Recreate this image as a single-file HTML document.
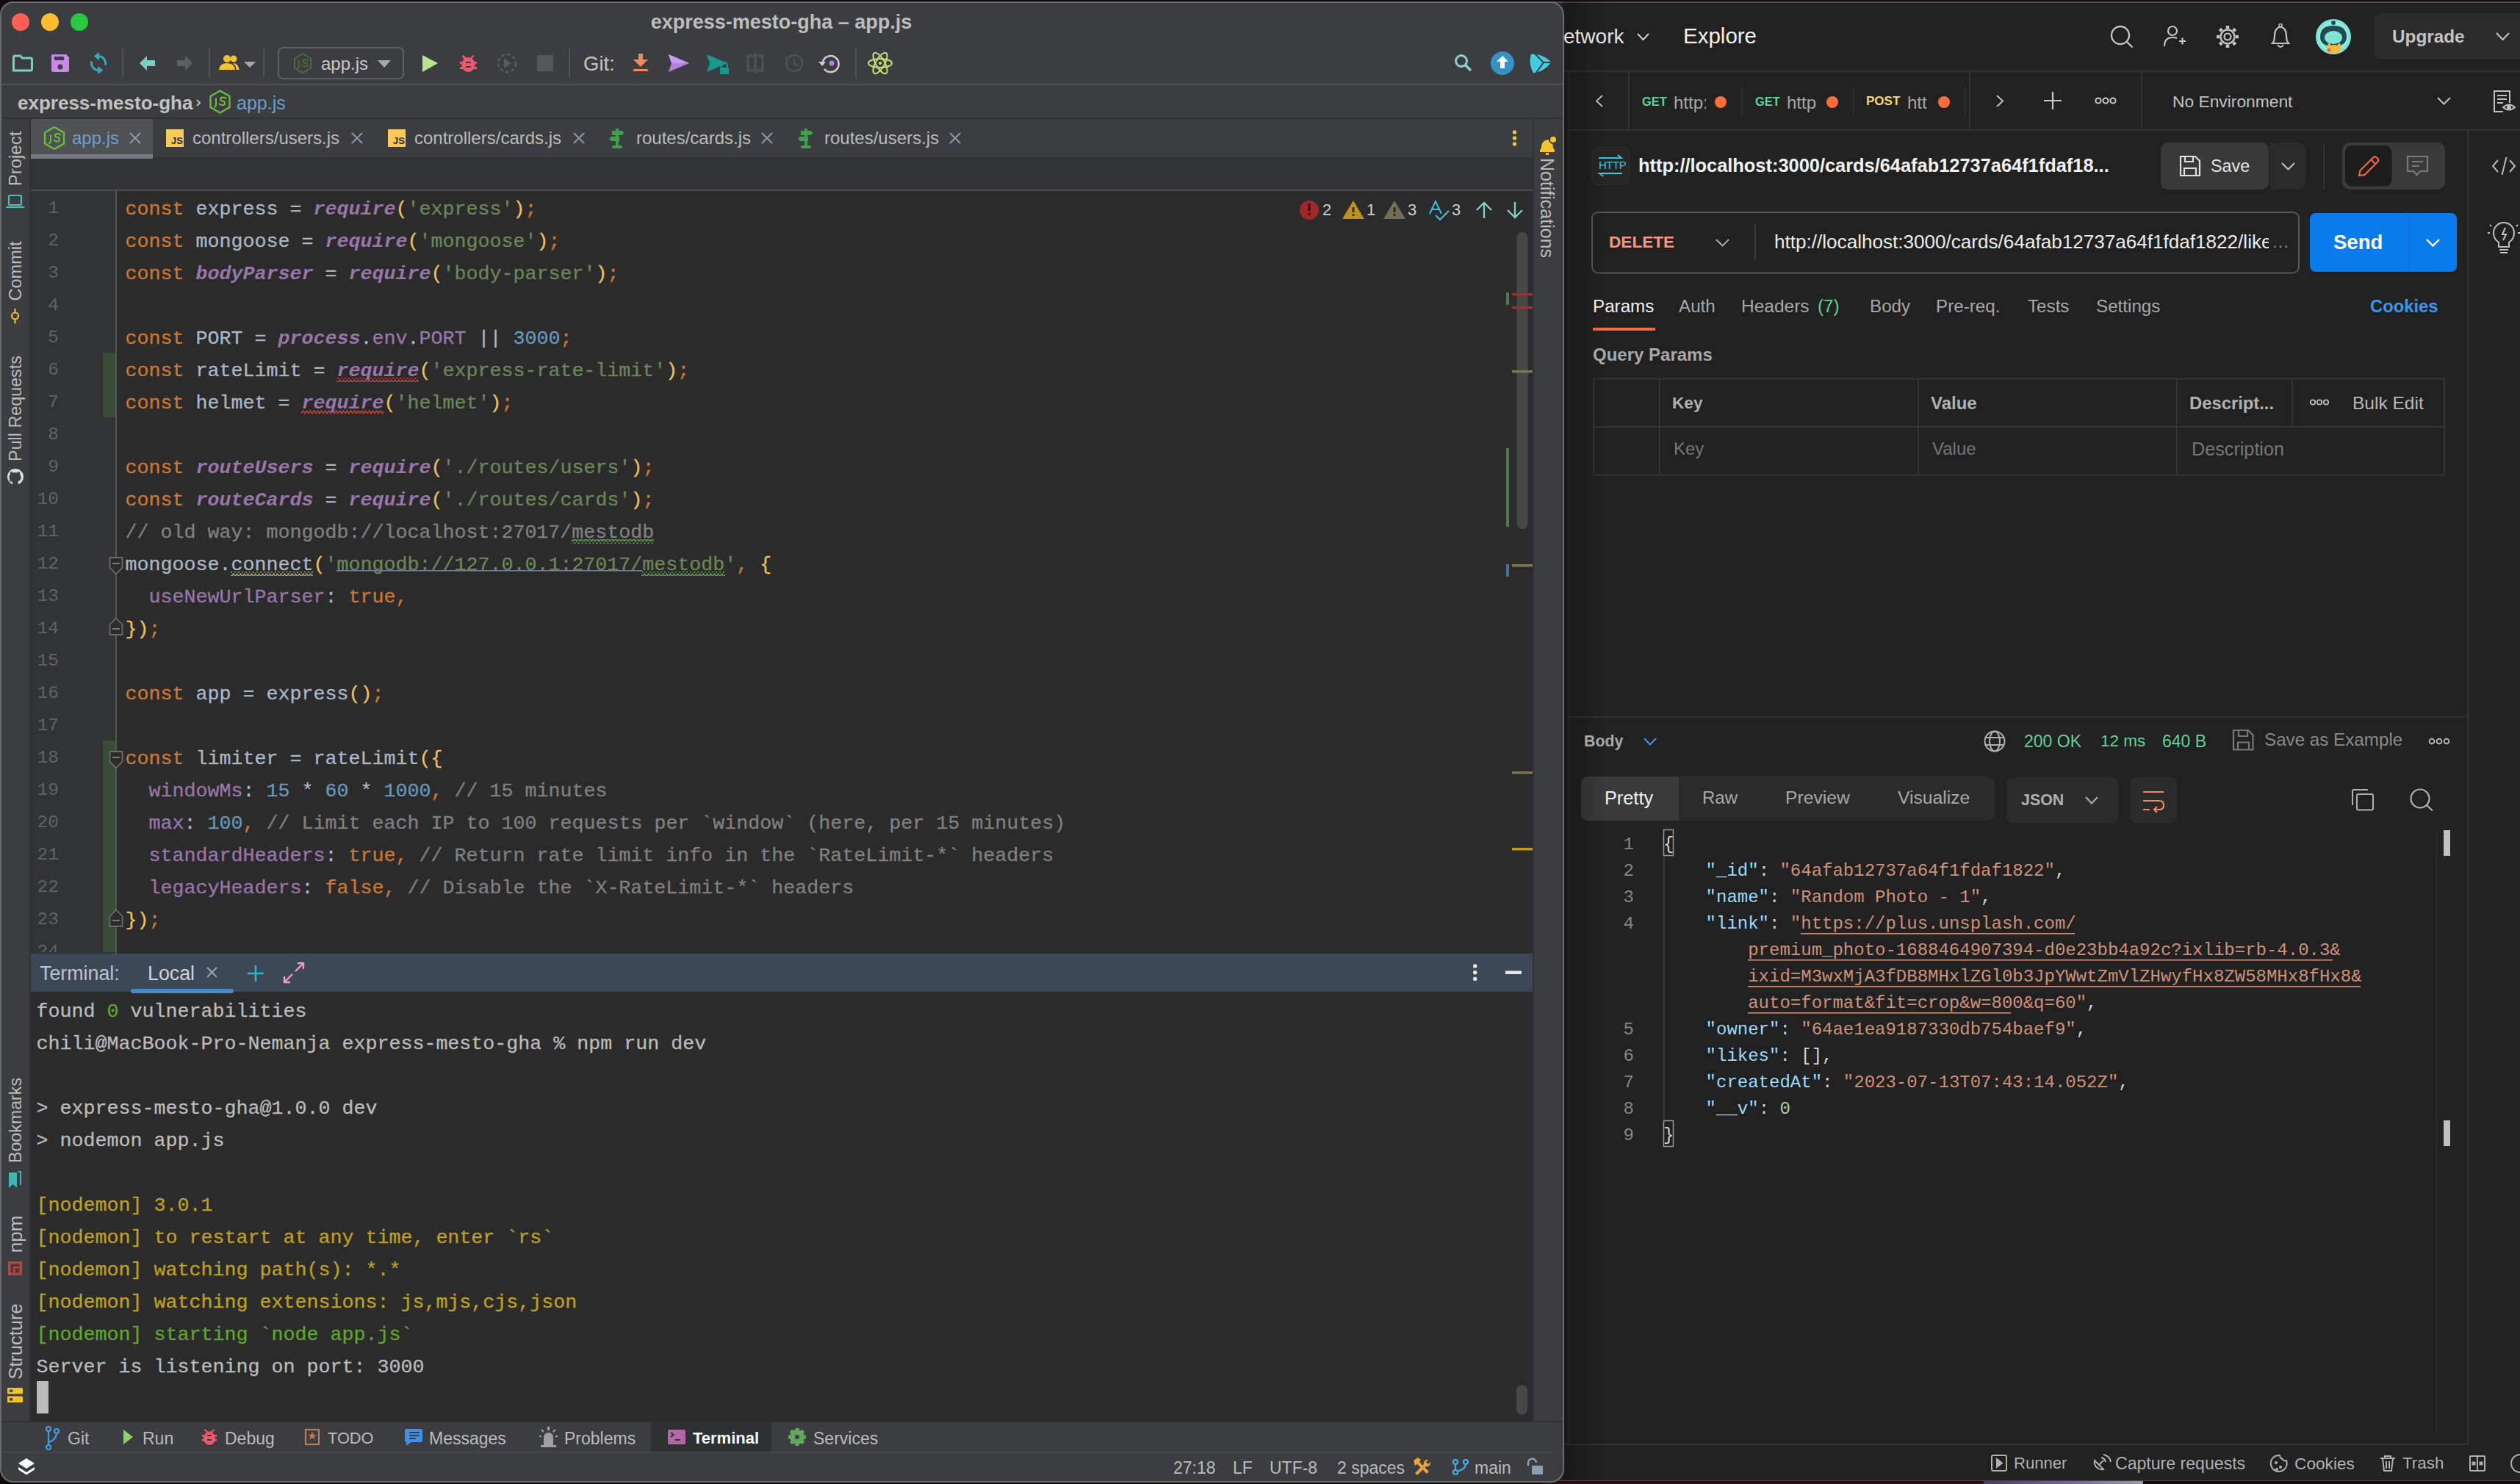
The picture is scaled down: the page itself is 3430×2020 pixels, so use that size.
<!DOCTYPE html>
<html><head><meta charset="utf-8">
<style>
*{margin:0;padding:0;box-sizing:border-box}
html,body{width:3430px;height:2020px;overflow:hidden;background:#150a0e}
body{position:relative;font-family:"Liberation Sans",sans-serif;color:#bbb}
.a{position:absolute}
.m{font-family:"Liberation Mono",monospace;white-space:pre}
.nw{white-space:nowrap}
/* code */
#code{left:170.5px;top:263px;font-size:26.67px;line-height:44px;color:#a9b7c6;-webkit-text-stroke:0.3px}
#code div{height:44px}
.k{color:#cc7832}.f{color:#9876aa;font-style:italic;font-weight:bold;-webkit-text-stroke:0}.p{color:#9876aa}.s{color:#6a8759}.y{color:#f0c05a}.n{color:#6897bb}.c{color:#808080}
#lnum{left:30px;top:262px;width:50px;height:1034px;overflow:hidden;font-size:24.5px;line-height:44px;color:#606366;text-align:right}
#lnum div{height:44px}
#term{left:49.5px;top:1355px;font-size:26.67px;line-height:44px;color:#bbbbbb;-webkit-text-stroke:0.3px}
#term div{height:44px}
.ty{color:#bea020}.tg{color:#5fa72c}
#json{left:2324px;top:1132.4px;font-size:24px;line-height:36px;color:#d4d4d4}
#json div{height:36px}
.jk{color:#9cdcfe}.js{color:#ce9178}.jn{color:#b5cea8}
#jnum{left:2180px;top:1132.4px;width:44px;font-size:24px;line-height:36px;color:#858585;text-align:right}
#jnum div{height:36px}
</style></head><body>

<!-- ================= POSTMAN ================= -->
<div class="a" style="left:2100px;top:2px;width:1330px;height:2013px;background:#212121"></div>
<div class="a" style="left:2100px;top:2px;width:1330px;height:1.5px;background:#4a4a4a"></div>
<svg class="a" style="left:2100px;top:0" width="1330" height="2020">
 <g transform="translate(-2100,0)" fill="none" stroke="#333" stroke-width="2">
  <path d="M2100 97 H3430"/><path d="M2136 177 H3430"/>
  <path d="M2135.5 98 V1966"/><path d="M2217 98 V176"/><path d="M2681 98 V176"/><path d="M2915 98 V176"/>
  <path d="M3359 177 V1966"/><path d="M2136 976 H3359"/><path d="M2127 1966 H3359"/>
 </g>
 <g transform="translate(-2100,0)">
  <path d="M2371 117 V157 M2523 117 V157 M2675 117 V157" stroke="#333" stroke-width="1.5"/>
  <path d="M2229 46 l7.5 8 7.5-8" fill="none" stroke="#d0d0d0" stroke-width="2"/>
  <!-- header icons -->
  <circle cx="2886" cy="48" r="12" fill="none" stroke="#c4c4c4" stroke-width="2.4"/><path d="M2894.5 56.5 l8 8" stroke="#c4c4c4" stroke-width="2.4"/>
  <circle cx="2957" cy="42" r="6" fill="none" stroke="#c4c4c4" stroke-width="2.2"/><path d="M2946 63 q0-12 11-12 q4 0 6 1" fill="none" stroke="#c4c4c4" stroke-width="2.2"/><path d="M2966 56 h9 M2970.5 51.5 v9" stroke="#c4c4c4" stroke-width="2.2"/>
  <g transform="translate(3032 50)"><circle r="9.5" fill="none" stroke="#c4c4c4" stroke-width="2.4"/><circle r="4.5" fill="none" stroke="#c4c4c4" stroke-width="2.2"/>
   <g stroke="#c4c4c4" stroke-width="4.5"><path d="M0 -15 v4 M0 11 v4 M-15 0 h4 M11 0 h4 M-10.6 -10.6 l2.8 2.8 M7.8 7.8 l2.8 2.8 M10.6 -10.6 l-2.8 2.8 M-7.8 7.8 l-2.8 2.8"/></g></g>
  <path d="M3093 59 q3-3 3-10 q0-11 8-12.5 q8 1.5 8 12.5 q0 7 3 10z" fill="none" stroke="#c4c4c4" stroke-width="2.2"/><circle cx="3104" cy="34.5" r="2" fill="none" stroke="#c4c4c4" stroke-width="1.6"/><path d="M3100 61 q4 6 8 0" fill="none" stroke="#c4c4c4" stroke-width="2"/>
  <circle cx="3176" cy="50" r="24" fill="#7fe6d6"/><circle cx="3176" cy="50" r="19" fill="none" stroke="#a6f0e6" stroke-width="1.3"/>
  <path d="M3158 50 q0-15 18-15 q18 0 18 15 q0 13-18 13 q-18 0-18-13z" fill="#244a55"/><ellipse cx="3176" cy="51" rx="12" ry="9" fill="#7fe6d6"/><circle cx="3176" cy="31" r="3" fill="#244a55"/>
  <path d="M3168 72 q-2-10 2-14 l3 4 q4-2 8 0 l3-4 q4 5 1 14z" fill="#f7b93a"/><circle cx="3170" cy="68" r="2.3" fill="#e8584b"/>
  <rect x="3232" y="18" width="220" height="63" rx="9" fill="#2b2b2b"/>
  <path d="M3398 45 l8.5 9 8.5-9" fill="none" stroke="#c0c0c0" stroke-width="2.2"/>
  <!-- tab row -->
  <path d="M2181 130 l-8 7.5 8 7.5" fill="none" stroke="#c0c0c0" stroke-width="2"/>
  <circle cx="2342" cy="139" r="8" fill="#ff6c37"/><circle cx="2494" cy="139" r="8" fill="#ff6c37"/><circle cx="2646" cy="139" r="8" fill="#ff6c37"/>
  <path d="M2718 130 l8 7.5 -8 7.5" fill="none" stroke="#c0c0c0" stroke-width="2"/>
  <path d="M2794 125 v24 M2782 137 h24" stroke="#c8c8c8" stroke-width="2.2"/>
  <g fill="none" stroke="#c8c8c8" stroke-width="2"><circle cx="2856" cy="137" r="3.6"/><circle cx="2866" cy="137" r="3.6"/><circle cx="2876" cy="137" r="3.6"/></g>
  <path d="M3318 133 l8.5 8.5 8.5-8.5" fill="none" stroke="#c0c0c0" stroke-width="2"/>
  <g fill="none" stroke="#c0c0c0" stroke-width="2"><path d="M3416 140 V124 h-21 v28 h12"/><path d="M3399 130 h13 M3399 135 h13 M3399 140 h8"/><path d="M3407 146 q8-7 16 0 q-8 7-16 0z"/><circle cx="3415" cy="146" r="2" fill="#c0c0c0"/></g>
  <!-- URL row -->
  <rect x="2167" y="200.5" width="50.5" height="51" rx="9" fill="#262626" stroke="#2f2f2f" stroke-width="1.5"/>
  <g fill="none" stroke="#3cc8dc" stroke-width="1.8"><path d="M2176 215 h31 l-5-4"/><path d="M2208 236 h-31 l5 4"/></g>
  <rect x="2941" y="194" width="147" height="64" rx="10" fill="#393939"/>
  <rect x="3090" y="194" width="48" height="64" rx="10" fill="#2b2b2b"/><rect x="3090" y="194" width="10" height="64" fill="#2b2b2b"/>
  <g fill="none" stroke="#e0e0e0" stroke-width="2.2"><path d="M2968 213 h20 l6 6 v20 h-26z"/><path d="M2974 213 v7 h11 v-7"/><path d="M2973 239 v-10 h16 v10"/></g>
  <path d="M3106 222 l8.5 8.5 8.5-8.5" fill="none" stroke="#c0c0c0" stroke-width="2"/>
  <path d="M3163 194 V258" stroke="#333" stroke-width="2"/>
  <rect x="3188" y="194" width="140" height="64" rx="10" fill="#3a3a3a"/>
  <rect x="3192" y="198" width="63.5" height="55.5" rx="9" fill="#1d1d1d"/>
  <g fill="none" stroke="#ff6c37" stroke-width="2"><path d="M3211 239 l1.5-7 18-18 q2-1.5 4 0 l2 2 q1.5 2 0 4 l-18 18z"/><path d="M3228 218 l4.5 4.5"/></g>
  <g fill="none" stroke="#7a7a7a" stroke-width="2.2"><path d="M3277 213 h27 v20 h-10 l-4.5 5 -4.5-5 h-8z"/><path d="M3283 220 h15 M3283 226 h10"/></g>
  <g fill="none" stroke="#b8b8b8" stroke-width="2"><path d="M3400 218 l-7 8 7 8 M3416 218 l7 8 -7 8 M3411.5 214 l-6 24"/></g>
  <!-- method row -->
  <rect x="2167" y="289" width="962" height="82.5" rx="8" fill="#212121" stroke="#565656" stroke-width="2"/>
  <path d="M2336 326 l8.5 8.5 8.5-8.5" fill="none" stroke="#a8a8a8" stroke-width="2"/>
  <path d="M2389 306 V354" stroke="#3d3d3d" stroke-width="2"/>
  <rect x="3144" y="290" width="200" height="80" rx="8" fill="#0a7bec"/>
  <path d="M3278.5 290 V370" stroke="#0b6fd3" stroke-width="1.6"/>
  <path d="M3303 326 l8.5 8.5 8.5-8.5" fill="none" stroke="#fff" stroke-width="2.4"/>
  <g fill="none" stroke="#c0c0c0" stroke-width="2"><path d="M3401 330 q-7-5-7-13 a14 14 0 0 1 28 0 q0 8-7 13 v6 h-14z"/><path d="M3402 340 h12 M3403 344 h10"/><path d="M3410 310 l-4 9 h5 l-4 8"/><path d="M3386 317 h3 M3427 317 h3 M3389 306 l2 2 M3427 306 l-2 2"/></g>
  <!-- params tabs -->
  <rect x="2168" y="446" width="85" height="4" fill="#ff6c37"/>
  <!-- table -->
  <g fill="none" stroke="#353535" stroke-width="2"><rect x="2169" y="515.5" width="1158" height="131"/><path d="M2169 581 H3327 M2259 515.5 V646.5 M2611 515.5 V646.5 M2963 515.5 V646.5 M3120 515.5 V581"/></g>
  <g fill="none" stroke="#c0c0c0" stroke-width="1.8"><circle cx="3148" cy="547.5" r="3.2"/><circle cx="3157" cy="547.5" r="3.2"/><circle cx="3166" cy="547.5" r="3.2"/></g>
  <!-- response bar -->
  <path d="M2238 1005 l8 8.5 8-8.5" fill="none" stroke="#3d8fe8" stroke-width="2.2"/>
  <g fill="none" stroke="#b0b0b0" stroke-width="2"><circle cx="2715" cy="1009" r="13.5"/><ellipse cx="2715" cy="1009" rx="7" ry="13.5"/><path d="M2702 1004 h26 M2702 1014 h26"/></g>
  <g fill="none" stroke="#777" stroke-width="2.2"><path d="M3040 994 h20 l6.5 6.5 v20 h-26.5z"/><path d="M3047 994 v8 h12 v-8"/><path d="M3046 1020.5 v-10 h15 v10"/></g>
  <g fill="none" stroke="#c0c0c0" stroke-width="1.8"><circle cx="3310" cy="1009" r="3.4"/><circle cx="3320" cy="1009" r="3.4"/><circle cx="3330" cy="1009" r="3.4"/></g>
  <rect x="2152" y="1057" width="563" height="60" rx="9" fill="#2b2b2b"/>
  <path d="M2161 1057 h124 v60 h-124 a9 9 0 0 1 -9-9 v-42 a9 9 0 0 1 9-9z" fill="#3a3a3a"/>
  <rect x="2731" y="1057.5" width="152" height="63" rx="9" fill="#2b2b2b"/>
  <path d="M2839 1085 l8 8.5 8-8.5" fill="none" stroke="#b0b0b0" stroke-width="2"/>
  <rect x="2899" y="1057.5" width="64" height="63" rx="9" fill="#2b2b2b"/>
  <g fill="none" stroke="#f08a5d" stroke-width="2.2"><path d="M2917 1078 h28 M2917 1090 h22 q6 0 6 6 q0 6-6 6 h-6 M2936 1098 l-4 4 4 4 M2917 1102 h9"/></g>
  <g fill="none" stroke="#b0b0b0" stroke-width="2"><rect x="3208" y="1081" width="22" height="21.5" rx="2"/><path d="M3202 1096 v-19 q0-2 2-2 h19"/></g>
  <circle cx="3294" cy="1087" r="12.5" fill="none" stroke="#b0b0b0" stroke-width="2.2"/><path d="M3303 1096 l8 7.5" stroke="#b0b0b0" stroke-width="2.2"/>
  <!-- json editor decorations -->
  <rect x="2264.5" y="1129.5" width="13" height="35" fill="none" stroke="#9a9a9a" stroke-width="1.5"/>
  <rect x="2264.5" y="1525.5" width="13" height="35" fill="none" stroke="#9a9a9a" stroke-width="1.5"/>
  <path d="M2265 1165 V1525" stroke="#4a4a44" stroke-width="1.3"/>
  <path d="M3316.5 1130 V1953" stroke="#2e2e2e" stroke-width="1.5"/>
  <rect x="3326" y="1130" width="9" height="35" fill="#c0c0c0"/><rect x="3326" y="1525" width="9" height="35" fill="#c0c0c0"/>
  <!-- link underlines -->
  <g fill="#ce9178"><rect x="2451" y="1170" width="0" height="0"/></g>
  <!-- status bar icons -->
  <g fill="none" stroke="#b0b0b0" stroke-width="2"><rect x="2711" y="1981" width="20" height="21" rx="2"/><path d="M2718 1986 l7 5.5 -7 5.5z" fill="#b0b0b0"/></g>
  <g fill="none" stroke="#b0b0b0" stroke-width="2"><path d="M2851 1988 a10 10 0 0 0 12 12z"/><path d="M2857 1994 l6-6 M2860 1984 q5 1 6 6 M2863 1980 q9 2 10 10"/></g>
  <g fill="none" stroke="#b0b0b0" stroke-width="2"><path d="M3112 1988 a11 11 0 1 1 -9-7 q0 4 4 5 q0 3 5 2z"/><circle cx="3098" cy="1991" r="1" fill="#b0b0b0"/><circle cx="3104" cy="1997" r="1" fill="#b0b0b0"/><circle cx="3099" cy="2000" r="1" fill="#b0b0b0"/></g>
  <g fill="none" stroke="#b0b0b0" stroke-width="2"><path d="M3240 1985 h20 M3246 1985 v-3 h8 v3 M3243 1985 l2 17 h10 l2-17 M3248 1989 v10 M3252 1989 v10"/></g>
  <g fill="none" stroke="#b0b0b0" stroke-width="2"><rect x="3362" y="1982" width="20" height="20" rx="1"/><path d="M3372 1982 v20"/><rect x="3365.5" y="1990.5" width="3" height="3" fill="#b0b0b0"/><rect x="3375.5" y="1990.5" width="3" height="3" fill="#b0b0b0"/></g>
  <circle cx="3430" cy="1992" r="12" fill="none" stroke="#b0b0b0" stroke-width="2"/>
 </g>
</svg>
<div class="a" style="left:2100px;top:2015px;width:1330px;height:1px;background:#4a4a4a"></div>
<div class="a" style="left:2100px;top:2016px;width:600px;height:4px;background:#2e0c14"></div>
<div class="a" style="left:2700px;top:2016px;width:217px;height:4px;background:linear-gradient(90deg,#4a3a6a,#7a6aa8 60%,#9a9aa8)"></div>
<div class="a" style="left:0;top:2017px;width:2100px;height:3px;background:#0a0a0a"></div>
<!-- shadow of IJ window on postman -->
<div class="a" style="left:2127px;top:2px;width:60px;height:2013px;background:linear-gradient(90deg,rgba(0,0,0,0.28),rgba(0,0,0,0))"></div>
<div class="a nw" style="left:2128px;top:34px;font-size:28px;color:#e2e2e2;line-height:32px">etwork</div>
<div class="a nw" style="left:2291px;top:33px;font-size:29.5px;color:#f0f0f0;line-height:32px">Explore</div>
<div class="a nw" style="left:3256px;top:34px;font-size:24.3px;font-weight:bold;color:#c4c4c4;line-height:32px">Upgrade</div>
<div class="a nw" style="left:2235px;top:126px;font-size:16.5px;font-weight:bold;color:#5fd495;line-height:24px">GET</div>
<div class="a nw" style="left:2278px;top:124.5px;font-size:24px;color:#a6a6a6;line-height:30px;width:44px;overflow:hidden">http:</div>
<div class="a nw" style="left:2389px;top:126px;font-size:16.5px;font-weight:bold;color:#5fd495;line-height:24px">GET</div>
<div class="a nw" style="left:2432px;top:124.5px;font-size:24px;color:#a6a6a6;line-height:30px">http</div>
<div class="a nw" style="left:2540px;top:126px;font-size:17px;font-weight:bold;color:#f8d86c;line-height:24px">POST</div>
<div class="a nw" style="left:2596px;top:124.5px;font-size:24px;color:#a6a6a6;line-height:30px">htt</div>
<div class="a nw" style="left:2957px;top:123px;font-size:22.8px;color:#c0c0c0;line-height:30px">No Environment</div>
<div class="a nw" style="left:2176px;top:216px;font-size:15px;color:#3cc8dc;line-height:18px;letter-spacing:-0.5px">HTTP</div>
<div class="a nw" style="left:2230px;top:209px;font-size:25.4px;font-weight:bold;color:#f2f2f2;line-height:32px">http://localhost:3000/cards/64afab12737a64f1fdaf18...</div>
<div class="a nw" style="left:3009px;top:210px;font-size:23.4px;color:#e4e4e4;line-height:32px">Save</div>
<div class="a nw" style="left:2190px;top:314px;font-size:22.6px;font-weight:bold;color:#ef9a87;line-height:32px">DELETE</div>
<div class="a nw" style="left:2415px;top:313px;font-size:26.1px;color:#ececec;line-height:32px;width:673px;overflow:hidden">http://localhost:3000/cards/64afab12737a64f1fdaf1822/likes</div>
<div class="a nw" style="left:3092px;top:313px;font-size:24px;color:#8a8a8a;line-height:32px">…</div>
<div class="a nw" style="left:3176px;top:313px;font-size:27.5px;font-weight:bold;color:#ffffff;line-height:34px">Send</div>
<div class="a nw" style="left:2168px;top:402px;font-size:24.2px;color:#f0f0f0;line-height:30px">Params</div>
<div class="a nw" style="left:2285px;top:402px;font-size:24.2px;color:#a8a8a8;line-height:30px">Auth</div>
<div class="a nw" style="left:2370px;top:402px;font-size:24.5px;color:#a8a8a8;line-height:30px">Headers</div><div class="a nw" style="left:2474px;top:402px;font-size:24.2px;color:#5fd495;line-height:30px">(7)</div>
<div class="a nw" style="left:2545px;top:402px;font-size:24.2px;color:#a8a8a8;line-height:30px">Body</div>
<div class="a nw" style="left:2635px;top:402px;font-size:24.2px;color:#a8a8a8;line-height:30px">Pre-req.</div>
<div class="a nw" style="left:2760px;top:402px;font-size:24.2px;color:#a8a8a8;line-height:30px">Tests</div>
<div class="a nw" style="left:2853px;top:402px;font-size:24.2px;color:#a8a8a8;line-height:30px">Settings</div>
<div class="a nw" style="left:3226px;top:402px;font-size:23.8px;font-weight:bold;color:#3f95ee;line-height:30px">Cookies</div>
<div class="a nw" style="left:2168px;top:468px;font-size:24px;font-weight:bold;color:#a8a8a8;line-height:30px">Query Params</div>
<div class="a nw" style="left:2276px;top:534px;font-size:22.6px;font-weight:bold;color:#b0b0b0;line-height:30px">Key</div>
<div class="a nw" style="left:2628px;top:534px;font-size:24px;font-weight:bold;color:#b0b0b0;line-height:30px">Value</div>
<div class="a nw" style="left:2980px;top:534px;font-size:23.8px;font-weight:bold;color:#b0b0b0;line-height:30px">Descript...</div>
<div class="a nw" style="left:3202px;top:534px;font-size:24.5px;color:#b8b8b8;line-height:30px">Bulk Edit</div>
<div class="a nw" style="left:2278px;top:596px;font-size:24px;color:#767676;line-height:30px">Key</div>
<div class="a nw" style="left:2630px;top:596px;font-size:24px;color:#767676;line-height:30px">Value</div>
<div class="a nw" style="left:2983px;top:596px;font-size:25.2px;color:#767676;line-height:30px">Description</div>
<div class="a nw" style="left:2156px;top:994px;font-size:21.3px;font-weight:bold;color:#a8a8a8;line-height:30px">Body</div>
<div class="a nw" style="left:2755px;top:994px;font-size:23px;color:#5fd495;line-height:30px">200 OK</div>
<div class="a nw" style="left:2859px;top:994px;font-size:22.5px;color:#5fd495;line-height:30px">12 ms</div>
<div class="a nw" style="left:2943px;top:994px;font-size:23px;color:#5fd495;line-height:30px">640 B</div>
<div class="a nw" style="left:3082px;top:992px;font-size:24.2px;color:#8a8a8a;line-height:30px">Save as Example</div>
<div class="a nw" style="left:2184px;top:1071px;font-size:25.3px;color:#f0f0f0;line-height:30px">Pretty</div>
<div class="a nw" style="left:2317px;top:1071px;font-size:24px;color:#a8a8a8;line-height:30px">Raw</div>
<div class="a nw" style="left:2430px;top:1071px;font-size:24.7px;color:#a8a8a8;line-height:30px">Preview</div>
<div class="a nw" style="left:2583px;top:1071px;font-size:24.7px;color:#a8a8a8;line-height:30px">Visualize</div>
<div class="a nw" style="left:2751px;top:1074px;font-size:21.4px;font-weight:bold;color:#b0b0b0;line-height:30px">JSON</div>
<div class="a nw" style="left:2741px;top:1977px;font-size:22.1px;color:#b0b0b0;line-height:30px">Runner</div>
<div class="a nw" style="left:2879px;top:1977px;font-size:23.1px;color:#b0b0b0;line-height:30px">Capture requests</div>
<div class="a nw" style="left:3123px;top:1977px;font-size:22.7px;color:#b0b0b0;line-height:30px">Cookies</div>
<div class="a nw" style="left:3270px;top:1977px;font-size:22.4px;color:#b0b0b0;line-height:30px">Trash</div>


<!-- ================= INTELLIJ ================= -->
<div class="a" style="left:0;top:2px;width:2129px;height:2016px;border-radius:18px;background:#3c3d40;border:2px solid #6a6b6d;overflow:hidden">
</div>
<div id="ijwrap" class="a" style="left:0;top:0;width:2129px;height:2018px;clip-path:inset(4px 2px 2px 2px round 16px)">
  <!-- separators -->
  <div class="a" style="left:0;top:114px;width:2129px;height:2px;background:#515151"></div>
  <div class="a" style="left:0;top:160px;width:2129px;height:2px;background:#2f3133"></div>
  <!-- left stripe border -->
  <div class="a" style="left:40px;top:162px;width:2px;height:1772px;background:#323232"></div>
  <div class="a" style="left:2086px;top:162px;width:2px;height:1772px;background:#323232"></div>
  <!-- tab row -->
  <div class="a" style="left:42px;top:162px;width:2044px;height:52px;background:#3c3d40"></div>
  <div class="a" style="left:42px;top:162px;width:166px;height:53px;background:#4e5254"></div>
  <!-- strip -->
  <div class="a" style="left:42px;top:214px;width:2044px;height:44px;background:#313335"></div>
  <div class="a" style="left:42px;top:210px;width:166px;height:6px;background:#747a80"></div>
  <div class="a" style="left:42px;top:258px;width:2044px;height:2px;background:#4b4d4f"></div>
  <!-- editor -->
  <div class="a" style="left:42px;top:260px;width:116px;height:1038px;background:#313335"></div>
  <div class="a" style="left:157px;top:260px;width:2px;height:1038px;background:#555"></div>
  <div class="a" style="left:159px;top:260px;width:1927px;height:1038px;background:#2b2b2b"></div>
  <!-- terminal -->
  <div class="a" style="left:42px;top:1298px;width:2044px;height:52px;background:#3d4857"></div>
  <div class="a" style="left:42px;top:1350px;width:2044px;height:584px;background:#2b2b2b"></div>
  <!-- bottom bars -->
  <div class="a" style="left:0;top:1934px;width:2129px;height:42px;background:#3c3d40"></div>
  <div class="a" style="left:0;top:1934px;width:2129px;height:2px;background:#2f3032"></div>
  <div class="a" style="left:0;top:1976px;width:2129px;height:1px;background:#4a4c4e"></div>
</div>


<!-- IJ title + toolbar -->
<svg class="a" style="left:0;top:0" width="2130" height="220">
 <circle cx="28" cy="30" r="12" fill="#fe5f57"/><circle cx="68" cy="30" r="12" fill="#febc2e"/><circle cx="108" cy="30" r="12" fill="#28c840"/>
 <!-- folder -->
 <path d="M18.5 96 V78 q0-2 2-2 h7 l3 3 h11 q2 0 2 2 V94 q0 2-2 2 Z" fill="none" stroke="#7ecdc3" stroke-width="3"/>
 <!-- save -->
 <path d="M70 76 q0-2 2-2 h18 l4 4 V96 q0 2-2 2 H72 q-2 0-2-2 Z" fill="#c98ae6"/>
 <rect x="74" y="77" width="13" height="5" fill="#3c3d40"/><circle cx="82" cy="91" r="3.5" fill="#3c3d40"/>
 <!-- sync -->
 <path d="M134 76.5 A9.5 9.5 0 0 1 143.2 88.5" fill="none" stroke="#39a6bd" stroke-width="3"/>
 <path d="M134 95.5 A9.5 9.5 0 0 1 124.8 83.5" fill="none" stroke="#39a6bd" stroke-width="3"/>
 <path d="M127.5 76.5 L135 71 V82z" fill="#39a6bd"/><path d="M140.5 95.5 L133 90 V101z" fill="#39a6bd"/>
 <rect x="166" y="66" width="2" height="40" fill="#505254"/>
 <!-- back / fwd -->
 <path d="M190 86 L200 76 V82 H211 V90 H200 V96 Z" fill="#7ecdc3"/>
 <path d="M262 86 L252 76 V82 H241 V90 H252 V96 Z" fill="#5c5e5f"/>
 <rect x="284" y="66" width="2" height="40" fill="#505254"/>
 <!-- people -->
 <circle cx="309" cy="80" r="5" fill="#f5c231"/><circle cx="318" cy="80" r="4.5" fill="#f5c231"/>
 <path d="M298 95 q1-9 11-9 q10 0 11 9z" fill="#f5c231"/><path d="M318 86 q7 1 7.5 9 h-4 q0-6-4-8z" fill="#f5c231"/>
 <path d="M332 84 h16 l-8 8z" fill="#a8a8a8"/>
 <rect x="358" y="66" width="2" height="40" fill="#505254"/>
 <!-- run config combo -->
 <rect x="379" y="65" width="170" height="42" rx="6" fill="none" stroke="#5d6062" stroke-width="2"/>
 <path d="M412 73 l11 6.5 v13 l-11 6.5 -11-6.5 v-13z" fill="none" stroke="#4e6b3d" stroke-width="2"/><path d="M407 82 v8 q0 3-3 3" fill="none" stroke="#4e6b3d" stroke-width="1.8"/><path d="M420 83 q-2-2-4.5-2 q-3 0-3 2.3 q0 2 3 2.3 q3 .4 3 2.8 q0 2.3-3 2.3 q-3 0-4.5-2" fill="none" stroke="#4e6b3d" stroke-width="1.8"/>
 <path d="M532 82 h-18 l9 10z" fill="#a8a8a8"/>
 <!-- run / debug / attach / stop -->
 <path d="M575 75 L596 86 L575 98 Z" fill="#b5e48c"/>
 <g fill="#f2576d"><ellipse cx="637.5" cy="88" rx="9" ry="10"/><rect x="626" y="84" width="23" height="3"/><rect x="626" y="91" width="23" height="3"/><path d="M631 75 l4 4 h5 l4-4 1.5 1.5-3.5 4v2h-10v-2l-3.5-4z"/></g>
 <rect x="634" y="84" width="7" height="2" fill="#3c3d40"/><rect x="634" y="90" width="7" height="2" fill="#3c3d40"/>
 <circle cx="690" cy="86" r="12" fill="none" stroke="#5a5d5f" stroke-width="2.5" stroke-dasharray="5 3"/><path d="M686 79 L696 86 L686 93z" fill="#5a5d5f"/>
 <rect x="731" y="75" width="22" height="22" fill="#555759"/>
 <rect x="774" y="66" width="2" height="40" fill="#505254"/>
 <!-- git icons -->
 <g fill="#f08a5d"><rect x="869" y="73" width="6" height="9"/><path d="M862 81 h20 l-10 10z"/><rect x="862" y="94" width="20" height="3"/></g>
 <path d="M910 74 L938 86 L910 98 L914 86z" fill="#b57fe0"/><path d="M910 74 L938 86 L914 86z" fill="#c89bf0"/>
 <path d="M962 74 L990 86 L962 98 L966 86z" fill="#169a8d"/>
 <rect x="980" y="92" width="12" height="9" rx="1" fill="#169a8d"/><path d="M982 92 v-3 a4 4 0 0 1 8 0 v3" fill="none" stroke="#169a8d" stroke-width="2"/>
 <g fill="none" stroke="#4f5254" stroke-width="3"><path d="M1026 76 h-8 v20 h8"/><path d="M1030 76 h8 v20 h-8"/></g><rect x="1026.5" y="72" width="3" height="28" fill="#4f5254"/>
 <circle cx="1081" cy="86" r="11" fill="none" stroke="#4f5254" stroke-width="2.5"/><path d="M1081 80 v7 l5 3" fill="none" stroke="#4f5254" stroke-width="2.5"/>
 <path d="M1122 94 A11 11 0 1 0 1120 84" fill="none" stroke="#cfcfcf" stroke-width="2.5"/><path d="M1114 84 h10 l-5 6z" fill="#cfcfcf"/><circle cx="1132" cy="86" r="3.5" fill="#c679e8"/>
 <rect x="1164" y="66" width="2" height="40" fill="#505254"/>
 <g fill="none" stroke="#c5e478" stroke-width="2"><ellipse cx="1198" cy="86" rx="16" ry="6"/><ellipse cx="1198" cy="86" rx="16" ry="6" transform="rotate(60 1198 86)"/><ellipse cx="1198" cy="86" rx="16" ry="6" transform="rotate(-60 1198 86)"/></g><circle cx="1198" cy="86" r="2" fill="#c5e478"/>
 <!-- right toolbar -->
 <circle cx="1989" cy="83" r="7.5" fill="none" stroke="#8ecfcf" stroke-width="3"/><path d="M1994 88 l8 8" stroke="#8ecfcf" stroke-width="3.5"/>
 <circle cx="2045" cy="86" r="16" fill="#3592c4"/><path d="M2045 76 l-8 8 h5 v9 h6 v-9 h5z" fill="#fff"/>
 <path d="M2084 73.5 Q2103 74 2111 85 Q2103 97 2087 99.5 Q2080 86 2084 73.5z" fill="#44cde0"/><path d="M2088 72 L2101 85 L2090 100 M2101 85 H2113" fill="none" stroke="#3c3d40" stroke-width="2"/>
 <!-- breadcrumb node icon -->
<g transform="translate(0,-2.5)"> <path d="M299.5 126 l13 7.5 v15 l-13 7.5 -13-7.5 v-15z" fill="none" stroke="#6cbd3a" stroke-width="2.3"/>
 <path d="M294 136 v9 q0 3-3 3" fill="none" stroke="#6cbd3a" stroke-width="2"/><path d="M308 137 q-2-2-5-2 q-3 0-3 2.5 q0 2 3 2.5 q3 .5 3 3 q0 2.5-3 2.5 q-3 0-5-2" fill="none" stroke="#6cbd3a" stroke-width="2"/></g>
 <path d="M268 136 l4 4 -4 4" fill="none" stroke="#bbb" stroke-width="2"/>
</svg>
<div class="a nw" style="left:0;top:14px;width:2127px;text-align:center;font-size:27px;font-weight:bold;color:#bdbdbd;line-height:32px">express-mesto-gha – app.js</div>
<div class="a nw" style="left:437px;top:71px;font-size:24px;color:#c8c8c8;line-height:32px">app.js</div>
<div class="a nw" style="left:794px;top:71px;font-size:27.5px;color:#c4c4c4;line-height:32px">Git:</div>
<div class="a nw" style="left:24px;top:124px;font-size:26px;font-weight:bold;color:#c2c2c2;line-height:32px">express-mesto-gha</div>
<div class="a nw" style="left:322px;top:124px;font-size:25px;color:#6a9fd0;line-height:32px">app.js</div>

<!-- tabs -->
<svg class="a" style="left:0;top:160px" width="2130" height="60">
 <g transform="translate(0,-160)">
 <path d="M74 173 l13 7.5 v15 l-13 7.5 -13-7.5 v-15z" fill="none" stroke="#6cbd3a" stroke-width="2.3"/>
 <path d="M69 183 v9 q0 3-3 3" fill="none" stroke="#6cbd3a" stroke-width="2"/><path d="M83 184 q-2-2-5-2 q-3 0-3 2.5 q0 2 3 2.5 q3 .5 3 3 q0 2.5-3 2.5 q-3 0-5-2" fill="none" stroke="#6cbd3a" stroke-width="2"/>
 <path d="M177 181 l14 14 M191 181 l-14 14" stroke="#8c9aa6" stroke-width="2"/>
 <rect x="226" y="176" width="24" height="24" fill="#f9c95a"/>
 <rect x="528" y="176" width="24" height="24" fill="#f9c95a"/>
 <path d="M479 181 l14 14 M493 181 l-14 14" stroke="#8c9aa6" stroke-width="2"/>
 <path d="M781 181 l14 14 M795 181 l-14 14" stroke="#8c9aa6" stroke-width="2"/>
 <path d="M1037 181 l14 14 M1051 181 l-14 14" stroke="#8c9aa6" stroke-width="2"/>
 <path d="M1293 181 l14 14 M1307 181 l-14 14" stroke="#8c9aa6" stroke-width="2"/>
 <g fill="#3fa04c"><rect x="838" y="175" width="4" height="25"/><path d="M833 178 h13 l4 3 -4 3 h-13z"/><path d="M843 186 h-11 l-3 3 3 3 h11z"/><rect x="833" y="198" width="14" height="4" rx="2"/></g>
 <g fill="#3fa04c"><rect x="1095" y="175" width="4" height="25"/><path d="M1090 178 h13 l4 3 -4 3 h-13z"/><path d="M1100 186 h-11 l-3 3 3 3 h11z"/><rect x="1090" y="198" width="14" height="4" rx="2"/></g>
 <g fill="#f0c735"><circle cx="2061.5" cy="180" r="2.7"/><circle cx="2061.5" cy="188" r="2.7"/><circle cx="2061.5" cy="196" r="2.7"/></g>
 </g>
</svg>
<div class="a nw" style="left:233px;top:184px;font-size:13px;font-weight:bold;color:#2b2b2b">JS</div>
<div class="a nw" style="left:535px;top:184px;font-size:13px;font-weight:bold;color:#2b2b2b">JS</div>
<div class="a nw" style="left:98px;top:173px;font-size:24px;color:#6e9fcf;line-height:30px">app.js</div>
<div class="a nw" style="left:262px;top:173px;font-size:24px;color:#bbbbbb;line-height:30px">controllers/users.js</div>
<div class="a nw" style="left:564px;top:173px;font-size:24px;color:#bbbbbb;line-height:30px">controllers/cards.js</div>
<div class="a nw" style="left:866px;top:173px;font-size:24px;color:#bbbbbb;line-height:30px">routes/cards.js</div>
<div class="a nw" style="left:1122px;top:173px;font-size:24px;color:#bbbbbb;line-height:30px">routes/users.js</div>

<!-- editor overlays -->
<svg class="a" style="left:0;top:0" width="2130" height="2020">
 <!-- git change bars -->
 <rect x="140" y="480" width="17" height="88" fill="#384c38"/>
 <rect x="140" y="1008" width="17" height="288" fill="#384c38"/>
 <!-- fold markers -->
 <g fill="#2b2b2b" stroke="#6a6a6a" stroke-width="1.8">
  <path d="M149.5 759 h17 v14 l-8.5 8.5 -8.5-8.5z"/><path d="M149.5 864 h17 v-14 l-8.5-8.5 -8.5 8.5z"/>
  <path d="M149.5 1023 h17 v14 l-8.5 8.5 -8.5-8.5z"/><path d="M149.5 1261 h17 v-14 l-8.5-8.5 -8.5 8.5z"/>
 </g>
 <g stroke="#7a7a7a" stroke-width="1.8"><path d="M153 767h10M153 856h10M153 1031h10M153 1253h10"/></g>
 <!-- squiggles -->
 <defs>
  <pattern id="wr" width="10" height="6" patternUnits="userSpaceOnUse"><path d="M0 5 L2.5 1 L5 5 L7.5 1 L10 5" fill="none" stroke="#bc3f3c" stroke-width="1.5"/></pattern>
  <pattern id="wg" width="10" height="6" patternUnits="userSpaceOnUse"><path d="M0 5 L2.5 1 L5 5 L7.5 1 L10 5" fill="none" stroke="#629755" stroke-width="1.5"/></pattern>
  <pattern id="wy" width="10" height="6" patternUnits="userSpaceOnUse"><path d="M0 5 L2.5 1 L5 5 L7.5 1 L10 5" fill="none" stroke="#a49e7e" stroke-width="1.5"/></pattern>
 </defs>
 <rect x="458" y="514" width="112" height="6" fill="url(#wr)"/>
 <rect x="410" y="558" width="112" height="6" fill="url(#wr)"/>
 <rect x="778" y="734" width="112" height="6" fill="url(#wg)"/>
 <rect x="314" y="778" width="112" height="6" fill="url(#wy)"/>
 <rect x="458" y="776" width="416" height="1.6" fill="#6f7f9a"/>
 <rect x="873" y="778" width="114" height="6" fill="url(#wg)"/>
 <!-- inspections widget -->
 <circle cx="1782" cy="286" r="13" fill="#9e2927"/><rect x="1780.5" y="277" width="3" height="10" fill="#3a1010"/><rect x="1780.5" y="290" width="3" height="3" fill="#3a1010"/>
 <path d="M1842 273 L1857 298 H1827z" fill="#be9117"/><rect x="1840.5" y="282" width="3" height="7" fill="#3a3010"/><rect x="1840.5" y="291" width="3" height="3" fill="#3a3010"/>
 <path d="M1898 273 L1913 298 H1883z" fill="#756d56"/><rect x="1896.5" y="282" width="3" height="7" fill="#2f2a20"/><rect x="1896.5" y="291" width="3" height="3" fill="#2f2a20"/>
 <path d="M1946 291 L1954 274 L1962 291 M1949 285 h10" fill="none" stroke="#3ec0dc" stroke-width="2"/><path d="M1954 293 l6 6 12-12" fill="none" stroke="#3ec0dc" stroke-width="2.2"/>
 <path d="M2020 297 V276 M2010 286 l10-10 10 10" fill="none" stroke="#83d0c8" stroke-width="2.3"/>
 <path d="M2062 275 V296 M2052 286 l10 10 10-10" fill="none" stroke="#83d0c8" stroke-width="2.3"/>
 <!-- scrollbar -->
 <rect x="2064.5" y="316" width="15" height="404" rx="7.5" fill="#484848"/>
 <rect x="2050" y="398" width="4" height="17" fill="#4d7a4d"/>
 <rect x="2058" y="399" width="28" height="3.5" fill="#9e2f2f"/><rect x="2058" y="417" width="28" height="3.5" fill="#9e2f2f"/>
 <rect x="2058" y="504" width="28" height="3.5" fill="#7d7558"/>
 <rect x="2050" y="610" width="4" height="107" fill="#4d7a4d"/>
 <rect x="2058" y="768" width="28" height="3.5" fill="#7d7558"/>
 <rect x="2050" y="768" width="4" height="17" fill="#4a7295"/>
 <rect x="2058" y="1050" width="28" height="3.5" fill="#7d7558"/>
 <rect x="2058" y="1154" width="28" height="3.5" fill="#c19a1e"/>
 <!-- terminal header -->
 <rect x="178" y="1346" width="140" height="6" rx="3" fill="#4a88c7"/>
 <path d="M282 1317 l13 13 M295 1317 l-13 13" stroke="#9aa4ae" stroke-width="2"/>
 <path d="M348 1314 v22 M337 1325 h22" stroke="#2bb5c8" stroke-width="2.6"/>
 <g fill="none" stroke="#f29ec0" stroke-width="2.4"><path d="M402 1322 l11-11 M405 1311 h8 v8 M398 1326 l-11 11 M387 1329 v8 h8"/></g>
 <g fill="#e8e8e8"><circle cx="2007.7" cy="1315" r="2.7"/><circle cx="2007.7" cy="1323.7" r="2.7"/><circle cx="2007.7" cy="1332.4" r="2.7"/></g>
 <rect x="2049" y="1321.5" width="22" height="4.5" fill="#e8e8e8"/>
 <!-- terminal scrollbar + cursor -->
 <rect x="50" y="1880" width="16" height="44" fill="#bbbbbb"/>
 <rect x="2064" y="1885" width="15" height="41" rx="7.5" fill="#474747"/>
 <!-- left stripe icons -->
 <g fill="none" stroke="#46c0b8" stroke-width="2.2"><rect x="12" y="266" width="17" height="13" rx="1.5"/><path d="M8 282 h25"/></g>
 <g fill="none" stroke="#f5b731" stroke-width="2.2"><circle cx="20.5" cy="430" r="4.5"/><path d="M20.5 420 v5.5 M20.5 434.5 v6"/></g>
 <g><circle cx="21" cy="649" r="11" fill="#dcdcdc"/><path d="M17 660 v-4 q-4 .5-5-3 q2 .5 3 2 q1 1 2 .5 q-4.5-1-4.5-6 q0-2.5 1.5-4 q-.5-2 .5-3.5 q2 0 3.5 1.5 q2.5-.7 5 0 q1.5-1.5 3.5-1.5 q1 1.5.5 3.5 q1.5 1.5 1.5 4 q0 5-4.5 6 q1 1 1 3 v4.5z" fill="#3c3d40"/></g>
 <g fill="#40b6b0"><path d="M12 1596 h11 v21 l-5.5-5 -5.5 5z"/><path d="M25 1594 h4 v19 h-2 v-17 h-2z"/></g>
 <g><rect x="11" y="1717" width="19" height="19" fill="#c33d3d"/><rect x="14.5" y="1720.5" width="12" height="12" fill="#3c3d40"/><rect x="18" y="1724" width="2.6" height="8.5" fill="#c33d3d"/><rect x="18" y="1724" width="8" height="2.6" fill="#c33d3d"/></g>
 <g fill="#f2c12e"><rect x="10" y="1889" width="21" height="8.5" rx="1"/><rect x="10" y="1900.5" width="21" height="8.5" rx="1"/></g>
 <g fill="#3c3d40"><rect x="13" y="1891.5" width="4" height="3.5"/><rect x="13" y="1903" width="4" height="3.5"/></g>
 <!-- right stripe bell -->
 <path d="M2096 207 q0-4 2-6 q0-9 8-11 q8 2 8 11 q2 2 2 6z" fill="#f5c431"/><rect x="2104" y="208" width="4" height="3" fill="#f5c431"/><circle cx="2114" cy="190" r="5" fill="#f5c431" stroke="#3c3d40" stroke-width="2"/>
 <!-- bottom tool bar icons -->
 <g fill="none" stroke="#3d9ee8" stroke-width="2.2"><circle cx="66" cy="1970" r="3"/><circle cx="66" cy="1945" r="3"/><circle cx="77" cy="1948" r="3"/><path d="M66 1948 v19 M77 1951 q0 8-10 12"/></g>
 <path d="M168 1946 L181 1956 L168 1966z" fill="#8fcf6b"/>
 <g fill="#f2576d"><ellipse cx="285" cy="1958" rx="8" ry="9"/><rect x="275" y="1953" width="20" height="2.6"/><rect x="275" y="1959" width="20" height="2.6"/><path d="M279 1945 l3.5 3.5 h5 l3.5-3.5 1.3 1.3-3 3.5v2h-8.6v-2l-3-3.5z"/></g>
 <rect x="282" y="1953" width="6" height="2" fill="#3c3d40"/><rect x="282" y="1959" width="6" height="2" fill="#3c3d40"/>
 <rect x="416" y="1946" width="18" height="20" fill="none" stroke="#c07a5a" stroke-width="2.2"/><path d="M425 1949 l2 4 h3.5 l-3 2.5 1 4 -3.5-2.5 -3.5 2.5 1-4 -3-2.5 h3.5z" fill="#c07a5a"/>
 <path d="M553 1945 h20 q2 0 2 2 v14 q0 2-2 2 h-13 l-7 5 v-5 q-2 0-2-2 v-14 q0-2 2-2z" fill="#3f8fe6"/><g stroke="#3c3d40" stroke-width="1.8"><path d="M557 1950 h14 M557 1954 h14 M557 1958 h9"/></g>
 <g fill="#a0a0a0"><path d="M740 1968 v-10 q0-8 6.5-8 q6.5 0 6.5 8 v10z"/><rect x="736" y="1967" width="21" height="3"/><rect x="745" y="1942" width="3" height="5"/><path d="M737 1946 l3 3 M756 1946 l-3 3 M734 1955 h3 M756 1955 h3" stroke="#a0a0a0" stroke-width="2"/></g>
 <rect x="886" y="1935" width="164" height="41" fill="#2e3032"/>
 <rect x="909" y="1946" width="24" height="20" rx="1.5" fill="#b266a8"/><path d="M913 1950 l4 3 -4 3 M919 1960 h7" fill="none" stroke="#2e3032" stroke-width="1.8"/>
 <g transform="translate(1085 1956)"><circle r="7.5" fill="none" stroke="#62a85a" stroke-width="5"/><g fill="#62a85a"><rect x="-2.5" y="-12" width="5" height="24"/><rect x="-12" y="-2.5" width="24" height="5"/><rect x="-2.5" y="-12" width="5" height="24" transform="rotate(45)"/><rect x="-2.5" y="-12" width="5" height="24" transform="rotate(-45)"/></g><circle r="3" fill="#3c3d40"/></g>
 <!-- status bar icons -->
 <g fill="#fff"><path d="M36 1985 l11 7 -11 7 -11-7z"/><path d="M25 1997 l11 7 11-7 v3.5 l-11 7 -11-7z"/></g>
 <g fill="#e8a33a"><path d="M1924 1988 l6-4 4 3 -2 3 13 13 -3 3 -13-13 -3 2z"/><path d="M1944 1987 a5 5 0 0 0-6 6 l-12 12 3 3 12-12 a5 5 0 0 0 6-6 l-3 3 -3-3z"/></g>
 <g fill="none" stroke="#3fb0e8" stroke-width="2.2"><circle cx="1981" cy="2004" r="3"/><circle cx="1981" cy="1990" r="3"/><circle cx="1995" cy="1990" r="3"/><path d="M1981 1993 v8 M1995 1993 q0 7-12 10"/></g>
 <g fill="#8aa0b0"><rect x="2085" y="1995" width="15" height="12" rx="1"/></g><path d="M2080 1995 v-4 a5.5 5.5 0 0 1 11 0" fill="none" stroke="#8aa0b0" stroke-width="2.6"/>
</svg>
<div class="a nw" style="left:54px;top:1311px;font-size:26.8px;color:#bdc3c9;line-height:28px">Terminal:</div>
<div class="a nw" style="left:201px;top:1311px;font-size:26.8px;color:#d0d4d8;line-height:28px">Local</div>
<!-- vertical labels -->
<div class="a nw" style="left:20.5px;top:216px;font-size:24px;color:#bbbbbb;line-height:22px;transform:translate(-50%,-50%) rotate(-90deg)">Project</div>
<div class="a nw" style="left:20.5px;top:369px;font-size:23.5px;color:#bbbbbb;line-height:22px;transform:translate(-50%,-50%) rotate(-90deg)">Commit</div>
<div class="a nw" style="left:20.5px;top:556px;font-size:23.3px;color:#bbbbbb;line-height:22px;transform:translate(-50%,-50%) rotate(-90deg)">Pull Requests</div>
<div class="a nw" style="left:20.5px;top:1524.5px;font-size:23.2px;color:#bbbbbb;line-height:22px;transform:translate(-50%,-50%) rotate(-90deg)">Bookmarks</div>
<div class="a nw" style="left:20.5px;top:1680px;font-size:26px;color:#bbbbbb;line-height:22px;transform:translate(-50%,-50%) rotate(-90deg)">npm</div>
<div class="a nw" style="left:20.5px;top:1826px;font-size:25.5px;color:#bbbbbb;line-height:22px;transform:translate(-50%,-50%) rotate(-90deg)">Structure</div>
<div class="a nw" style="left:2106px;top:283px;font-size:25px;color:#bbbbbb;line-height:22px;transform:translate(-50%,-50%) rotate(90deg)">Notifications</div>
<!-- bottom tool bar text -->
<div class="a nw" style="left:92px;top:1944px;font-size:23px;color:#bbbbbb;line-height:28px">Git</div>
<div class="a nw" style="left:194px;top:1944px;font-size:23px;color:#bbbbbb;line-height:28px">Run</div>
<div class="a nw" style="left:306px;top:1944px;font-size:23px;color:#bbbbbb;line-height:28px">Debug</div>
<div class="a nw" style="left:446px;top:1944px;font-size:21.8px;color:#bbbbbb;line-height:28px">TODO</div>
<div class="a nw" style="left:584px;top:1944px;font-size:23px;color:#bbbbbb;line-height:28px">Messages</div>
<div class="a nw" style="left:768px;top:1944px;font-size:23px;color:#bbbbbb;line-height:28px">Problems</div>
<div class="a nw" style="left:943px;top:1944px;font-size:22px;font-weight:bold;color:#ffffff;line-height:28px">Terminal</div>
<div class="a nw" style="left:1107px;top:1944px;font-size:23px;color:#bbbbbb;line-height:28px">Services</div>
<!-- status bar text -->
<div class="a nw" style="left:1597px;top:1984px;font-size:23px;color:#bbbbbb;line-height:28px">27:18</div>
<div class="a nw" style="left:1678px;top:1984px;font-size:23px;color:#bbbbbb;line-height:28px">LF</div>
<div class="a nw" style="left:1728px;top:1984px;font-size:23px;color:#bbbbbb;line-height:28px">UTF-8</div>
<div class="a nw" style="left:1820px;top:1984px;font-size:23px;color:#bbbbbb;line-height:28px">2 spaces</div>
<div class="a nw" style="left:2007px;top:1984px;font-size:23px;color:#bbbbbb;line-height:28px">main</div>

<div class="a nw" style="left:1800px;top:271px;font-size:22px;color:#cfcfcf;line-height:30px">2</div>
<div class="a nw" style="left:1860px;top:271px;font-size:22px;color:#cfcfcf;line-height:30px">1</div>
<div class="a nw" style="left:1916px;top:271px;font-size:22px;color:#cfcfcf;line-height:30px">3</div>
<div class="a nw" style="left:1976px;top:271px;font-size:22px;color:#cfcfcf;line-height:30px">3</div>
<svg class="a" style="left:2300px;top:1160px" width="1100" height="260"><g fill="#ce9178" transform="translate(-2300,-1160)">
 <rect x="2451" y="1270" width="373" height="1.6"/>
 <rect x="2379" y="1306" width="796" height="1.6"/>
 <rect x="2379" y="1342" width="834" height="1.6"/>
 <rect x="2379" y="1378" width="358" height="1.6"/>
</g></svg>
<div id="lnum" class="a m"><div>1</div><div>2</div><div>3</div><div>4</div><div>5</div><div>6</div><div>7</div><div>8</div><div>9</div><div>10</div><div>11</div><div>12</div><div>13</div><div>14</div><div>15</div><div>16</div><div>17</div><div>18</div><div>19</div><div>20</div><div>21</div><div>22</div><div>23</div><div>24</div></div>

<div id="code" class="a m"><div><span class="k">const</span> express = <span class="f">require</span><span class="y">(</span><span class="s">'express'</span><span class="y">)</span><span class="k">;</span></div><div><span class="k">const</span> mongoose = <span class="f">require</span><span class="y">(</span><span class="s">'mongoose'</span><span class="y">)</span><span class="k">;</span></div><div><span class="k">const</span> <span class="f">bodyParser</span> = <span class="f">require</span><span class="y">(</span><span class="s">'body-parser'</span><span class="y">)</span><span class="k">;</span></div><div></div><div><span class="k">const</span> PORT = <span class="f">process</span>.<span class="p">env</span>.<span class="p">PORT</span> || <span class="n">3000</span><span class="k">;</span></div><div><span class="k">const</span> rateLimit = <span class="f">require</span><span class="y">(</span><span class="s">'express-rate-limit'</span><span class="y">)</span><span class="k">;</span></div><div><span class="k">const</span> helmet = <span class="f">require</span><span class="y">(</span><span class="s">'helmet'</span><span class="y">)</span><span class="k">;</span></div><div></div><div><span class="k">const</span> <span class="f">routeUsers</span> = <span class="f">require</span><span class="y">(</span><span class="s">'./routes/users'</span><span class="y">)</span><span class="k">;</span></div><div><span class="k">const</span> <span class="f">routeCards</span> = <span class="f">require</span><span class="y">(</span><span class="s">'./routes/cards'</span><span class="y">)</span><span class="k">;</span></div><div><span class="c">// old way: mongodb://localhost:27017/mestodb</span></div><div>mongoose.connect<span class="y">(</span><span class="s">'mongodb://127.0.0.1:27017/mestodb'</span><span class="k">,</span> <span class="y">{</span></div><div>  <span class="p">useNewUrlParser</span>: <span class="k">true,</span></div><div><span class="y">})</span><span class="k">;</span></div><div></div><div><span class="k">const</span> app = express<span class="y">()</span><span class="k">;</span></div><div></div><div><span class="k">const</span> limiter = rateLimit<span class="y">({</span></div><div>  <span class="p">windowMs</span>: <span class="n">15</span> * <span class="n">60</span> * <span class="n">1000</span><span class="k">,</span> <span class="c">// 15 minutes</span></div><div>  <span class="p">max</span>: <span class="n">100</span><span class="k">,</span> <span class="c">// Limit each IP to 100 requests per `window` (here, per 15 minutes)</span></div><div>  <span class="p">standardHeaders</span>: <span class="k">true,</span> <span class="c">// Return rate limit info in the `RateLimit-*` headers</span></div><div>  <span class="p">legacyHeaders</span>: <span class="k">false,</span> <span class="c">// Disable the `X-RateLimit-*` headers</span></div><div><span class="y">})</span><span class="k">;</span></div></div>

<div id="term" class="a m"><div>found <span class="tg">0</span> vulnerabilities</div><div>chili@MacBook-Pro-Nemanja express-mesto-gha % npm run dev</div><div></div><div>&gt; express-mesto-gha@1.0.0 dev</div><div>&gt; nodemon app.js</div><div></div><div class="ty">[nodemon] 3.0.1</div><div class="ty">[nodemon] to restart at any time, enter `rs`</div><div class="ty">[nodemon] watching path(s): *.*</div><div class="ty">[nodemon] watching extensions: js,mjs,cjs,json</div><div class="tg">[nodemon] starting `node app.js`</div><div>Server is listening on port: 3000</div></div>

<div id="jnum" class="a m"><div>1</div><div>2</div><div>3</div><div>4</div><div></div><div></div><div></div><div>5</div><div>6</div><div>7</div><div>8</div><div>9</div></div>
<div id="json" class="a m" style="left:2264px"><div>{</div><div>    <span class="jk">"_id"</span>: <span class="js">"64afab12737a64f1fdaf1822"</span>,</div><div>    <span class="jk">"name"</span>: <span class="js">"Random Photo - 1"</span>,</div><div>    <span class="jk">"link"</span>: <span class="js">"https://plus.unsplash.com/</span></div><div class="js">        premium_photo-1688464907394-d0e23bb4a92c?ixlib=rb-4.0.3&amp;</div><div class="js">        ixid=M3wxMjA3fDB8MHxlZGl0b3JpYWwtZmVlZHwyfHx8ZW58MHx8fHx8&amp;</div><div>        <span class="js">auto=format&amp;fit=crop&amp;w=800&amp;q=60"</span>,</div><div>    <span class="jk">"owner"</span>: <span class="js">"64ae1ea9187330db754baef9"</span>,</div><div>    <span class="jk">"likes"</span>: [],</div><div>    <span class="jk">"createdAt"</span>: <span class="js">"2023-07-13T07:43:14.052Z"</span>,</div><div>    <span class="jk">"__v"</span>: <span class="jn">0</span></div><div>}</div></div>

</body></html>
